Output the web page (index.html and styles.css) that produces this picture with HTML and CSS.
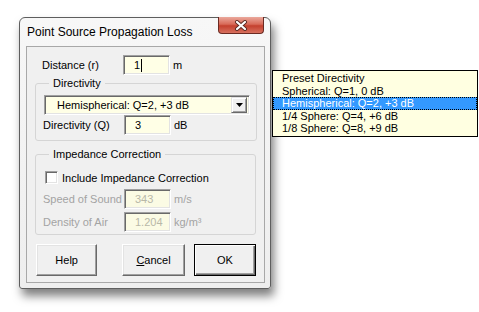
FILE: index.html
```html
<!DOCTYPE html>
<html lang="en">
<head>
  <meta charset="UTF-8" />
  <title>Point Source Propagation Loss</title>
  <link rel="stylesheet" href="styles.css">
</head>
<body>
  <div class="dialog">
    <div class="caption">
      <span class="title">Point Source Propagation Loss</span>
      <div class="close-btn">
        <svg width="14" height="11" viewBox="0 0 14 11">
          <path d="M3 2 L11 9 M11 2 L3 9" stroke="#5a2a22" stroke-width="4" stroke-linecap="round" fill="none"/>
          <path d="M3 2 L11 9 M11 2 L3 9" stroke="#ffffff" stroke-width="2.2" stroke-linecap="round" fill="none"/>
        </svg>
      </div>
    </div>

    <div class="client">
      <div class="row first-row">
        <span class="lbl">Distance (r)</span>
        <div class="field">1<span class="caret"></span></div>
        <span class="unit">m</span>
      </div>

      <fieldset class="frame">
        <legend>Directivity</legend>
        <div class="combo">
          <span class="combo-text">Hemispherical: Q=2, +3 dB</span>
          <span class="drop-btn">
            <svg width="7" height="4" viewBox="0 0 7 4"><path d="M0 0 H7 L3.5 4 Z" fill="#000"/></svg>
          </span>
        </div>
        <div class="row">
          <span class="lbl">Directivity (Q)</span>
          <div class="field">3</div>
          <span class="unit">dB</span>
        </div>
      </fieldset>

      <fieldset class="frame frame-imp">
        <legend>Impedance Correction</legend>
        <div class="check-row">
          <span class="checkbox"></span>
          <span>Include Impedance Correction</span>
        </div>
        <div class="row disabled">
          <span class="lbl">Speed of Sound</span>
          <div class="field">343</div>
          <span class="unit">m/s</span>
        </div>
        <div class="row disabled row-tight">
          <span class="lbl">Density of Air</span>
          <div class="field">1.204</div>
          <span class="unit">kg/m³</span>
        </div>
      </fieldset>

      <div class="buttons">
        <div class="btn">Help</div>
        <div class="btn btn-cancel"><u>C</u>ancel</div>
        <div class="btn btn-default">OK</div>
      </div>
    </div>
  </div>

  <ul class="popup">
    <li>Preset Directivity</li>
    <li>Spherical: Q=1, 0 dB</li>
    <li class="selected">Hemispherical: Q=2, +3 dB</li>
    <li>1/4 Sphere: Q=4, +6 dB</li>
    <li>1/8 Sphere: Q=8, +9 dB</li>
  </ul>
</body>
</html>
```

FILE: styles.css
```css
body {
  margin: 0;
  background: #ffffff;
  font-family: "Liberation Sans", Arial, sans-serif;
  font-size: 11px;
  color: #000;
  width: 479px;
  height: 312px;
  overflow: hidden;
}

.dialog {
  position: absolute;
  left: 19px;
  top: 17px;
  width: 252px;
  height: 272px;
  box-sizing: border-box;
  border: 1px solid #5e5e5e;
  border-radius: 6px 6px 3px 3px;
  background: linear-gradient(#f7f7f7, #eeeeee);
  box-shadow: 3px 7px 10px rgba(0,0,0,0.5);
  display: flex;
  flex-direction: column;
}

.caption {
  height: 28px;
  display: flex;
  align-items: flex-start;
  justify-content: space-between;
  padding-left: 7px;
  padding-right: 6px;
}

.title {
  font-size: 12px;
  margin-top: 7px;
  color: #000;
}

.close-btn {
  width: 46px;
  height: 17px;
  margin-top: -1px;
  box-sizing: border-box;
  border: 1px solid #6b2a22;
  border-top: none;
  border-radius: 0 0 4px 4px;
  background: linear-gradient(#eaa89c, #d86a58 45%, #c4402e 55%, #d7705e);
  display: flex;
  align-items: center;
  justify-content: center;
}

.client {
  margin: 0 5px 5px 6px;
  flex: 1;
  box-sizing: border-box;
  border: 1px solid #a8a8a8;
  background: #f0f0f0;
  padding: 8px 8px 0 8px;
}

.row {
  display: flex;
  align-items: center;
  height: 20px;
}

.first-row {
  padding-left: 7px;
}

.lbl {
  width: 81px;
}

.field {
  width: 47px;
  height: 20px;
  box-sizing: border-box;
  background: #ffffe6;
  border-top: 1px solid #a0a0a0;
  border-left: 1px solid #a0a0a0;
  border-right: 1px solid #ffffff;
  border-bottom: 1px solid #ffffff;
  box-shadow: inset 1px 1px 0 #696969, inset -1px -1px 0 #e3e3e3;
  padding: 3px 0 0 10px;
  line-height: 13px;
  display: flex;
}

.caret {
  width: 1px;
  height: 13px;
  background: #000;
  margin-left: 1px;
}

.unit {
  margin-left: 3px;
}

.frame {
  margin: 2px 0 0 0;
  padding: 5px 6px 5px 7px;
  border: 1px solid #d5d5d5;
  border-radius: 3px;
}

.frame legend {
  padding: 0 4px;
  margin-left: 6px;
  line-height: 13px;
}

.frame-imp {
  margin-top: 7px;
  padding-bottom: 2px;
  padding-top: 8px;
}

.combo {
  height: 20px;
  width: 206px;
  margin-left: 1px;
  box-sizing: border-box;
  background: #ffffe6;
  border-top: 1px solid #a0a0a0;
  border-left: 1px solid #a0a0a0;
  border-right: 1px solid #ffffff;
  border-bottom: 1px solid #ffffff;
  box-shadow: inset 1px 1px 0 #696969, inset -1px -1px 0 #e3e3e3;
  display: flex;
  align-items: center;
  justify-content: space-between;
  padding: 2px;
}

.combo-text {
  padding-left: 10px;
}

.drop-btn {
  width: 16px;
  height: 16px;
  box-sizing: border-box;
  background: #f0f0f0;
  border-top: 1px solid #e3e3e3;
  border-left: 1px solid #e3e3e3;
  border-right: 1px solid #696969;
  border-bottom: 1px solid #696969;
  box-shadow: inset 1px 1px 0 #ffffff, inset -1px -1px 0 #a0a0a0;
  display: flex;
  align-items: center;
  justify-content: center;
}

.check-row {
  display: flex;
  align-items: center;
  height: 13px;
  margin: 2px 0 5px 2px;
}

.checkbox {
  width: 13px;
  height: 13px;
  box-sizing: border-box;
  background: #ffffff;
  border-top: 1px solid #a0a0a0;
  border-left: 1px solid #a0a0a0;
  border-right: 1px solid #ffffff;
  border-bottom: 1px solid #ffffff;
  box-shadow: inset 1px 1px 0 #696969, inset -1px -1px 0 #e3e3e3;
  margin-right: 4px;
}

.disabled {
  color: #a3a3a3;
}

.disabled .field {
  color: #b8b8a8;
  background: #fbfbe4;
}

.row-tight {
  margin-top: 3px;
}

.buttons {
  display: flex;
  margin-top: 9px;
  padding-left: 1px;
}

.btn {
  width: 62px;
  height: 32px;
  box-sizing: border-box;
  background: #f0f0f0;
  border-top: 1px solid #ffffff;
  border-left: 1px solid #ffffff;
  border-right: 1px solid #696969;
  border-bottom: 1px solid #696969;
  box-shadow: inset -1px -1px 0 #a0a0a0, inset 1px 1px 0 #e3e3e3;
  display: flex;
  align-items: center;
  justify-content: center;
}

.btn-cancel {
  margin-left: 25px;
  width: 63px;
}

.btn-default {
  margin-left: 9px;
  width: 63px;
  border: 1px solid #000;
  box-shadow: inset 1px 1px 0 #ffffff, inset -1px -1px 0 #696969, inset -2px -2px 0 #a0a0a0;
}

.popup {
  position: absolute;
  left: 272px;
  top: 70px;
  width: 206px;
  box-sizing: border-box;
  margin: 0;
  padding: 1px 0;
  list-style: none;
  background: #ffffe1;
  border: 1px solid #000;
}

.popup li {
  height: 12.6px;
  line-height: 13px;
  padding-left: 9px;
}

.popup .selected {
  background: #3399ff;
  color: #fff;
  outline: 1px dotted #000;
  outline-offset: -1px;
}
```
